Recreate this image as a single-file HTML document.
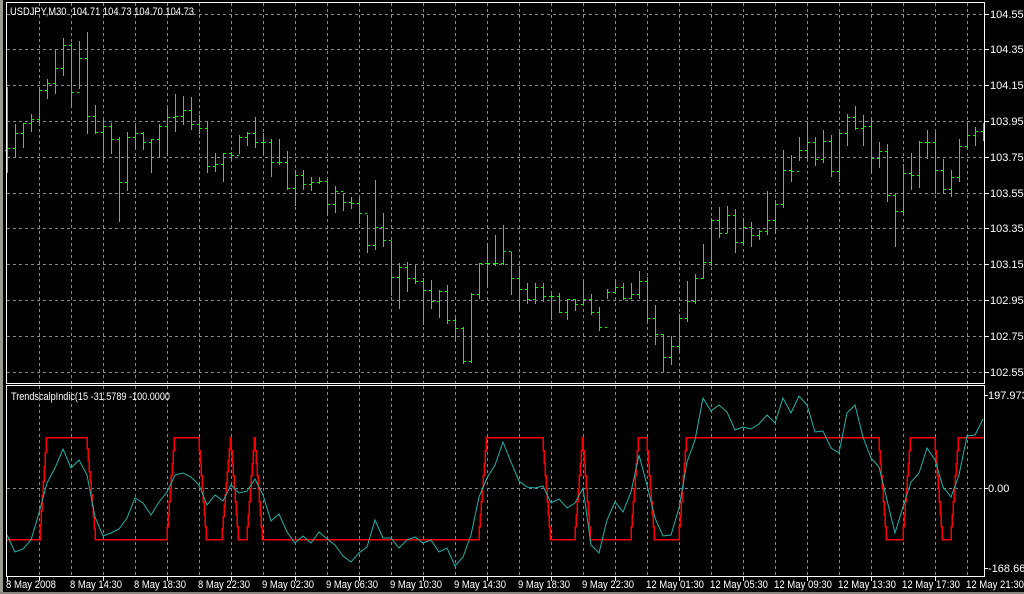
<!DOCTYPE html>
<html><head><meta charset="utf-8"><style>
html,body{margin:0;padding:0;background:#000;width:1024px;height:594px;overflow:hidden}
svg{display:block}
text{font-family:"Liberation Sans",Arial,sans-serif;font-size:11px;fill:#fff;white-space:pre}
</style></head><body>
<svg id="s" width="1024" height="594" viewBox="0 0 1024 594" xmlns="http://www.w3.org/2000/svg" shape-rendering="crispEdges">
<rect x="0" y="0" width="1024" height="594" fill="#000"/>
<rect x="0" y="0" width="3" height="594" fill="#9c9a90"/>
<rect x="0" y="592" width="1024" height="2" fill="#8a887e"/>
<g id="grid" stroke="#7d8a9c" stroke-width="1" stroke-dasharray="3,3" fill="none"></g>
<g id="bars" stroke="#00ff00" stroke-width="1" fill="none"></g>
<g id="ind" fill="none"></g>
<rect x="6.5" y="2.5" width="978" height="381" fill="none" stroke="#fff"/>
<rect x="6.5" y="385.5" width="978" height="191" fill="none" stroke="#fff"/>
<g id="ticks" stroke="#fff"></g>
<text x="10" y="15" textLength="184" lengthAdjust="spacingAndGlyphs">USDJPY,M30&#160;&#160;104.71 104.73 104.70 104.73</text>
<text x="11" y="400" textLength="159" lengthAdjust="spacingAndGlyphs">TrendscalpIndic(15 -31.5789 -100.0000</text>
<g id="plab">
<text x="990" y="18">104.55</text><text x="990" y="53">104.35</text><text x="990" y="89">104.15</text>
<text x="990" y="125">103.95</text><text x="990" y="161">103.75</text><text x="990" y="197">103.55</text>
<text x="990" y="232">103.35</text><text x="990" y="268">103.15</text><text x="990" y="304">102.95</text>
<text x="990" y="340">102.75</text><text x="990" y="376">102.55</text>
<text x="988" y="399">197.9738</text><text x="988" y="492">0.00</text><text x="988" y="572">-168.665</text>
</g>
<g id="tl"></g>
</svg>
<script>
var NS="http://www.w3.org/2000/svg";
function el(p,t,a){var e=document.createElementNS(NS,t);for(var k in a)e.setAttribute(k,a[k]);document.getElementById(p).appendChild(e);return e;}
var labs=[[6,"8 May 2008",50],[70,"8 May 14:30",52],[134,"8 May 18:30",52],[198,"8 May 22:30",52],[262,"9 May 02:30",52],[326,"9 May 06:30",52],[390,"9 May 10:30",52],[454,"9 May 14:30",52],[518,"9 May 18:30",52],[582,"9 May 22:30",52],[646,"12 May 01:30",58],[710,"12 May 05:30",58],[774,"12 May 09:30",58],[838,"12 May 13:30",58],[902,"12 May 17:30",58],[966,"12 May 21:30",58]];
labs.forEach(function(l){var t=el("tl","text",{x:l[0],y:588,textLength:l[2],lengthAdjust:"spacingAndGlyphs"});t.textContent=l[1];});
var g="";
for(var x=39;x<984;x+=32){g+="M"+(x+.5)+" 3V383M"+(x+.5)+" 386V576";}
var hy=[14,49,85,121,157,193,228,264,300,336,372];
hy.forEach(function(y){g+="M7 "+(y+.5)+"H984";});
g+="M7 488.5H984";
el("grid","path",{d:g});
var B=[[87,172,148],[124,157,133],[123,147,123],[114,131,119],[87,122,90],[79,98,83],[50,93,68],[38,75,45],[43,105,92],[41,88,58],[32,133,116],[105,133,132],[120,162,126],[123,153,139],[137,221,182],[132,190,137],[126,148,133],[132,149,142],[139,172,139],[124,157,126],[108,155,117],[94,131,116],[96,124,110],[97,129,124],[115,133,128],[121,172,166],[153,171,164],[153,181,153],[152,159,155],[135,153,137],[132,145,133],[117,147,142],[133,154,142],[139,176,162],[139,164,162],[151,189,188],[170,205,175],[170,189,184],[177,190,182],[177,183,181],[180,214,204],
[186,212,191],[193,210,202],[197,208,203],[198,223,213],[215,252,245],[180,249,227],[213,246,240],[241,295,277],[263,308,267],[262,291,278],[265,283,281],[278,324,290],[280,308,301],[290,317,291],[285,323,320],[318,340,328],[327,363,361],[293,362,294],[263,298,263],[243,286,263],[235,265,263],[225,264,251],[252,294,278],[266,308,289],[283,303,299],[283,303,287],[283,301,296],[294,319,296],[293,312,312],[299,319,299],[299,310,304],[281,304,299],[294,314,312],[307,330,327],[289,298,292],[279,293,287],[283,299,298],[283,298,294],[271,298,281],[277,322,318],
[305,344,334],[334,371,357],[336,364,346],[314,352,318],[281,321,301],[274,303,278],[244,278,262],[218,265,220],[207,237,233],[206,232,215],[209,252,242],[218,245,227],[222,246,235],[230,239,231],[191,234,220],[200,233,204],[150,207,170],[155,181,171],[137,160,150],[122,158,142],[137,165,159],[130,162,141],[135,176,171],[132,181,133],[114,145,117],[106,129,128],[115,145,126],[119,173,158],[142,167,151],[144,201,195],[193,246,211],[164,214,173],[153,189,175],[141,187,142],[130,158,142],[132,193,170],[159,193,189],[170,196,177],[139,181,146],[122,148,135],[127,145,131],[123,140,133]];
var d="",prev=150;
B.forEach(function(b,k){var x=7+8*k;if(x>983)return;var xs=x+.5;
d+="M"+xs+" "+b[0]+"V"+(b[1]+1);
d+="M"+(x-2)+" "+(prev+.5)+"H"+x;
if(x+3<=984)d+="M"+(x+1)+" "+(b[2]+.5)+"H"+(x+3);
prev=b[2];});
el("bars","path",{d:d});
var R=[[7,539],[40,539],[47,437],[87,437],[96,539],[167,539],[175,437],[199,437],[207,539],[222,539],[231,437],[239,539],[247,539],[255,437],[263,539],[479,539],[487,437],[543,437],[551,539],[575,539],[583,437],[591,539],[631,539],[639,437],[647,437],[655,539],[679,539],[687,437],[879,437],[887,539],[903,539],[911,437],[935,437],[943,539],[951,539],[959,437],[983,437]];
var rd="M"+R[0][0]+" "+(R[0][1]+.5);
for(var i=1;i<R.length;i++){var a=R[i-1],b=R[i];
 if(a[1]==b[1]){rd+="H"+b[0];}
 else{var n=b[0]-a[0];for(var j=1;j<=n;j++){var y=Math.round(a[1]+(b[1]-a[1])*j/n)+.5;rd+="V"+y+"H"+(a[0]+j);}}
}
el("ind","path",{d:rd,stroke:"#ff0000","stroke-width":"1.5"});
var C=[[7,535],[15,552],[23,549],[31,540],[39,513],[47,483],[55,468],[63,449],[71,468],[79,460],[87,475],[95,517],[103,536],[111,533],[119,529],[127,518],[135,498],[143,503],[151,515],[159,502],[167,492],[175,475],[183,473],[191,477],[199,485],[207,505],[215,495],[223,501],[231,485],[239,493],[247,491],[255,479],[263,495],[271,521],[279,514],[287,532],[295,543],[303,536],[311,543],[319,532],[327,539],[335,545],[343,556],[351,562],[359,553],[367,547],[375,520],[383,538],[391,538],[399,548],[407,540],[415,537],[423,543],[431,540],[439,552],[447,548],[455,566],[463,557],[471,535],[479,497],[487,478],[495,465],[503,442],[511,462],[519,481],[527,487],[535,488],[543,486],[551,503],[559,499],[567,508],[575,503],[583,488],[591,545],[599,553],[607,520],[615,502],[623,512],[631,492],[639,455],[647,485],[655,518],[663,536],[671,535],[679,508],[687,462],[695,440],[703,398],[711,411],[719,405],[727,412],[735,430],[743,427],[751,429],[759,424],[767,415],[775,423],[783,398],[791,413],[799,396],[807,405],[815,432],[823,431],[831,448],[839,453],[847,413],[855,405],[863,437],[871,458],[879,467],[887,500],[895,533],[903,507],[911,482],[919,473],[927,448],[935,460],[943,487],[951,497],[959,475],[967,436],[975,435],[983,419]];
el("ind","polyline",{points:C.map(function(p){return p.join(",")}).join(" "),stroke:"#20b2aa","stroke-width":"1","shape-rendering":"auto"});
var t="";
hy.forEach(function(y){t+="M985 "+(y+.5)+"H989";});
[395,488,568].forEach(function(y){t+="M985 "+(y+.5)+"H988";});
for(var x=39;x<984;x+=64){t+="M"+(x+.5)+" 577V581";}
t+="M7.5 577V581";
el("ticks","path",{d:t});
</script>
</body></html>
